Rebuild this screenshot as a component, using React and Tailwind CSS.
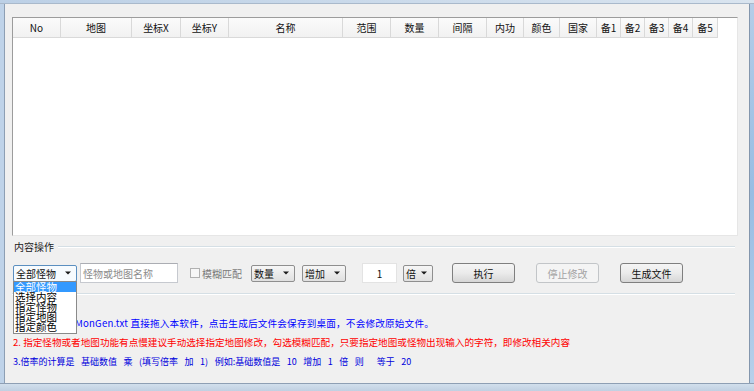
import React from 'react';
import clsx from 'clsx';

const columns = [
  { label: 'No', w: 'w-[48px]' },
  { label: '地图', w: 'w-[71px]' },
  { label: '坐标X', w: 'w-[49px]' },
  { label: '坐标Y', w: 'w-[48px]' },
  { label: '名称', w: 'w-[114px]' },
  { label: '范围', w: 'w-[48px]' },
  { label: '数量', w: 'w-[48px]' },
  { label: '间隔', w: 'w-[48px]' },
  { label: '内功', w: 'w-[37px]' },
  { label: '颜色', w: 'w-[36px]' },
  { label: '国家', w: 'w-[37px]' },
  { label: '备1', w: 'w-[24px]' },
  { label: '备2', w: 'w-[24px]' },
  { label: '备3', w: 'w-[24px]' },
  { label: '备4', w: 'w-[24px]' },
  { label: '备5', w: 'w-[25px]' },
];

const options = ['全部怪物', '选择内容', '指定怪物', '指定地图', '指定颜色'];

const Arrow = () => (
  <svg width="6" height="4" viewBox="0 0 6 4" className="shrink-0">
    <path d="M0 0.5h6L3 3.5z" fill="#1a1a1a" />
  </svg>
);

const Combo = ({ label, open, className }) => (
  <div
    className={clsx(
      'flex items-center justify-between h-[17px] pl-[2px] pr-[5px] rounded-[2px] border text-[10px] leading-[15px] text-[#111]',
      open
        ? 'border-[#5b8fc0] bg-[#f7fbfe]'
        : 'border-[#8f8f8f] bg-linear-to-b from-[#f6f6f6] to-[#e0e0e0]',
      className
    )}
  >
    <span>{label}</span>
    <Arrow />
  </div>
);

const Button = ({ label, disabled, className }) => (
  <div
    className={clsx(
      'flex items-center justify-center h-[20px] w-[63px] rounded-[3px] border text-[10px]',
      disabled
        ? 'border-[#c2c5c8] bg-[#f4f4f4] text-[#a3a3a3]'
        : 'border-[#7f7f7f] bg-linear-to-b from-[#f5f5f5] via-[#ebebeb] to-[#d6d6d6] text-[#111]',
      className
    )}
  >
    {label}
  </div>
);

const ListView = () => (
  <div className="ml-[7px] mt-[13px] w-[726px] h-[219px] bg-white border border-t-[#9c9c9c] border-l-[#9c9c9c] border-r-[#e6e6e6] border-b-[#e6e6e6]">
    <div className="flex h-[20px]">
      {columns.map((c) => (
        <div
          key={c.label}
          className={clsx(
            c.w,
            'flex items-center justify-center h-full border-r border-b border-[#d9d9d9] bg-linear-to-b from-[#fbfbfb] to-[#f1f1f1] text-[10px] text-[#111]'
          )}
        >
          {c.label}
        </div>
      ))}
    </div>
  </div>
);

const Controls = () => (
  <div className="relative flex items-center h-[20px] mt-[10px]">
    <div className="relative ml-[8px]">
      <Combo label="全部怪物" open className="w-[64px]" />
      <div className="absolute left-0 top-[16px] w-[64px] h-[53px] bg-white border border-[#8a8a8a] z-10 overflow-hidden">
        {options.map((o, i) => (
          <div
            key={o}
            className={clsx(
              'h-[10.2px] leading-[10.2px] text-[10.5px] pl-[1px] whitespace-nowrap',
              i === 0 ? 'bg-[#3399ff] text-white' : 'text-black'
            )}
          >
            {o}
          </div>
        ))}
      </div>
    </div>
    <div className="ml-[3px] w-[98px] h-[20px] bg-white border border-[#c6c9cf] border-t-[#abadb3] flex items-center pl-[2px] text-[10px] text-[#8c8c8c]">
      怪物或地图名称
    </div>
    <div className="ml-[12px] w-[10px] h-[10px] border border-[#b1b1b1] bg-[#f7f7f7]" />
    <div className="ml-[2px] w-[40px] text-[10px] text-[#7d7d7d] whitespace-nowrap">模糊匹配</div>
    <Combo label="数量" className="ml-[9px] w-[44px]" />
    <Combo label="增加" className="ml-[7px] w-[44px]" />
    <div className="ml-[16px] w-[35px] h-[20px] bg-white border border-[#e3e3e3] flex items-center justify-center text-[10px] text-[#111]">
      1
    </div>
    <Combo label="倍" className="ml-[6px] w-[30px]" />
    <Button label="执行" className="ml-[19px] w-[62px]" />
    <Button label="停止修改" disabled className="ml-[21px]" />
    <Button label="生成文件" className="ml-[21px]" />
  </div>
);

const Etched = ({ className }) => (
  <div className={clsx('h-[2px] border-t border-[#d5dfe5] border-b border-b-white', className)} />
);

export default function App() {
  return (
    <div className="w-[754px] h-[391px] overflow-hidden flex flex-col bg-[#c5d6e9] font-['Noto_Sans_CJK_SC','Liberation_Sans',sans-serif]">
      <div className="h-[4px] bg-linear-to-r from-[#bcd0e6] to-[#d9e4ef] border-b border-[#a9b9cb]" />
      <div className="flex h-[379px]">
        <div className="w-[5px] bg-[#bfd3e9] border-r border-[#8d9fb4]" />
        <div className="flex-1 bg-[#f0f0f0] flex flex-col">
          <ListView />

          <div className="flex items-center h-[12px] mt-[5px] ml-[9px] w-[721px]">
            <span className="text-[10px] leading-[12px] text-[#1a1a1a]">内容操作</span>
            <Etched className="flex-1 ml-[4px]" />
          </div>

          <Controls />

          <Etched className="mt-[10px] ml-[7px] w-[723px]" />

          <div className="mt-[18px] ml-[8px] h-[20px] leading-[20px] text-[9.6px] tracking-[0.2px] text-[#0000ff] whitespace-nowrap">
            1. 将刷怪文件 MonGen.txt 直接拖入本软件，点击生成后文件会保存到桌面，不会修改原始文件。
          </div>
          <div className="ml-[8px] h-[19px] leading-[19px] text-[9.6px] text-[#ff0000] whitespace-nowrap">
            2. 指定怪物或者地图功能有点慢建议手动选择指定地图修改，勾选模糊匹配，只要指定地图或怪物出现输入的字符，即修改相关内容
          </div>
          <div className="ml-[8px] h-[20px] leading-[20px] text-[9px] text-[#0000dd] whitespace-pre [word-spacing:4.5px]">
            3.倍率的计算是 基础数值 乘 (填写倍率 加 1) 例如:基础数值是 10 增加 1 倍 则  等于 20
          </div>
        </div>
        <div className="w-[5px] bg-linear-to-b from-[#b4cde8] via-[#98bde3] to-[#b7d0ea] border-l border-[#8396ad]" />
      </div>
      <div className="h-[8px] border-t border-[#8e9fb4] bg-linear-to-b from-[#d2dfec] to-[#c0d0e2]" />
    </div>
  );
}
